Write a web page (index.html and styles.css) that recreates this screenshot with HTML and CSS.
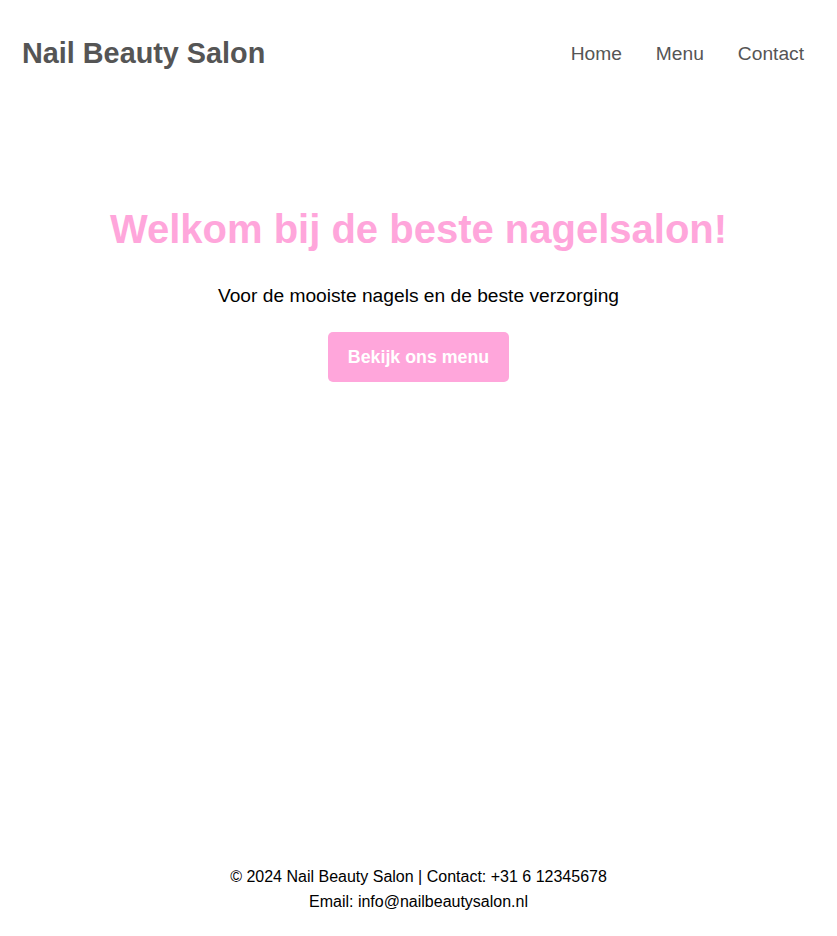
FILE: index.html
```html
<!DOCTYPE html>
<html lang="nl">
<head>
<meta charset="utf-8">
<title>Nail Beauty Salon</title>
<link rel="stylesheet" href="styles.css">
</head>
<body>
<header class="site-header">
  <h1 class="logo">Nail Beauty Salon</h1>
  <nav class="nav">
    <a href="#" class="nav-link">Home</a>
    <a href="#" class="nav-link">Menu</a>
    <a href="#" class="nav-link">Contact</a>
  </nav>
</header>
<main class="hero">
  <h2 class="hero-title">Welkom bij de beste nagelsalon!</h2>
  <p class="hero-text">Voor de mooiste nagels en de beste verzorging</p>
  <a href="#" class="btn">Bekijk ons menu</a>
</main>
<footer class="site-footer">
  <p class="footer-line">© 2024 Nail Beauty Salon | Contact: +31 6 12345678</p>
  <p class="footer-line">Email: info@nailbeautysalon.nl</p>
</footer>
</body>
</html>
```
FILE: styles.css
```css
* { box-sizing: border-box; }
html, body { height: 100%; }
body {
  margin: 0;
  font-family: "Liberation Sans", Arial, sans-serif;
  color: #000;
  background: #fff;
  display: flex;
  flex-direction: column;
  min-height: 100vh;
}
.site-header {
  display: flex;
  justify-content: space-between;
  align-items: center;
  padding: 20px 33px 20px 22px;
}
.logo {
  margin: 17px 0;
  font-size: 28.8px;
  font-weight: bold;
  color: #555;
}
.nav {
  display: flex;
  gap: 34px;
}
.nav-link {
  font-size: 19.2px;
  color: #555;
  text-decoration: none;
}
.hero {
  flex: 1;
  text-align: center;
  padding: 80px 20px;
}
.hero-title {
  margin: 20px 0;
  font-size: 40px;
  font-weight: bold;
  color: #ffa6db;
}
.hero-text {
  margin: 33px 0 25px;
  font-size: 19.2px;
}
.btn {
  display: inline-block;
  padding: 14px 20px;
  font-size: 17.8px;
  font-weight: bold;
  color: #fff;
  background: #ffa6db;
  border-radius: 5px;
  text-decoration: none;
  line-height: 22px;
}
.site-footer {
  text-align: center;
  padding: 20px 20px 22px;
  font-size: 16px;
}
.footer-line {
  margin: 0;
  line-height: 25px;
}
```
